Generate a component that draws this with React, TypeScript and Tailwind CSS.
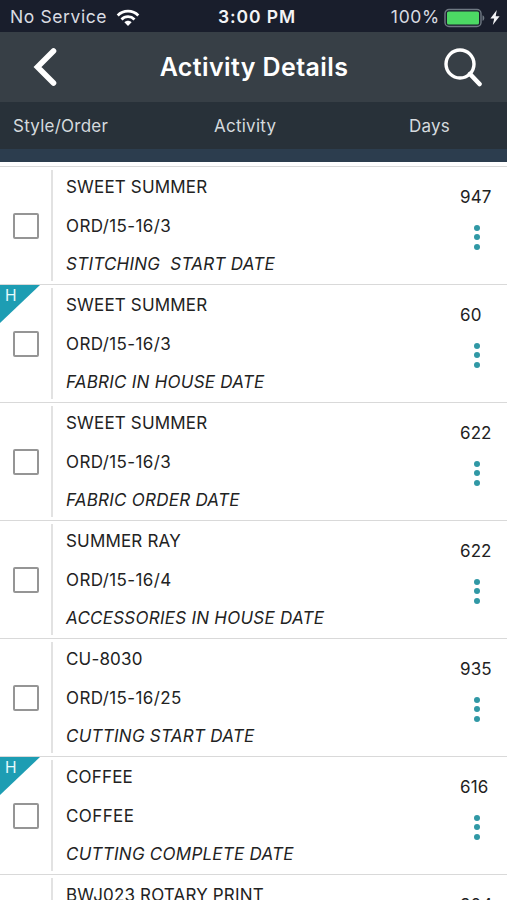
interface Activity {
  style: string;
  order: string;
  activity: string;
  days: string;
  highlighted?: boolean;
}

const activities: Activity[] = [
  { style: "SWEET SUMMER", order: "ORD/15-16/3", activity: "STITCHING  START DATE", days: "947" },
  { style: "SWEET SUMMER", order: "ORD/15-16/3", activity: "FABRIC IN HOUSE DATE", days: "60", highlighted: true },
  { style: "SWEET SUMMER", order: "ORD/15-16/3", activity: "FABRIC ORDER DATE", days: "622" },
  { style: "SUMMER RAY", order: "ORD/15-16/4", activity: "ACCESSORIES IN HOUSE DATE", days: "622" },
  { style: "CU-8030", order: "ORD/15-16/25", activity: "CUTTING START DATE", days: "935" },
  { style: "COFFEE", order: "COFFEE", activity: "CUTTING COMPLETE DATE", days: "616", highlighted: true },
  { style: "BWJ023 ROTARY PRINT", order: "", activity: "", days: "304" },
];

function StatusBar() {
  return (
    <div className="grid h-8 grid-cols-[1fr_auto_1fr] items-center bg-[#191e2c] pt-[3px] pr-[7px] pl-[10px] text-[17.5px] text-[#d9dce2]">
      <div className="flex items-center gap-[9px]">
        <span className="tracking-[0.6px]">No Service</span>
        <svg width="24" height="18" viewBox="0 0 24 18" fill="none" stroke="#fff" strokeWidth="2.8">
          <path d="M1.7 6.4C7.3.8 16.7.8 22.3 6.4" />
          <path d="M5.5 10.4c3.6-3.6 9.4-3.6 13 0" />
          <path d="M8.4 13.2c2-2 5.2-2 7.2 0L12 17z" fill="#fff" stroke="none" />
        </svg>
      </div>
      <span className="pl-[4px] font-semibold tracking-[0.9px] text-[#f3f4f6]">3:00 PM</span>
      <div className="flex items-center justify-end">
        <span className="tracking-[0.7px]">100%</span>
        <svg className="ml-[4px]" width="42" height="20" viewBox="0 0 42 20">
          <rect x="1" y="1.5" width="36" height="17" rx="4" fill="none" stroke="#6f7983" strokeWidth="1.4" />
          <rect x="3" y="3.5" width="32" height="13" rx="1.5" fill="#4cd964" />
          <path d="M38.5 7.2c2.4.8 2.4 4.8 0 5.6z" fill="#6f7983" />
        </svg>
        <svg className="ml-[4px]" width="10" height="15" viewBox="0 0 10 15">
          <path d="M6.8 0 .4 8.4h3.8L2.8 15 9.6 6.2H5.7z" fill="#f3f4f6" />
        </svg>
      </div>
    </div>
  );
}

function Header() {
  return (
    <header className="flex h-[70px] items-center justify-between bg-[#373f46] pr-[24px] pl-[32px] text-white">
      <button aria-label="Back">
        <svg width="26" height="40" viewBox="0 0 26 40" fill="none" stroke="#fff" strokeWidth="5.6" strokeLinecap="round">
          <path d="M21.500 4 5.500 20l16 16" />
        </svg>
      </button>
      <h1 className="pt-[2px] pl-[7px] text-[25px] font-semibold tracking-[0.4px]">Activity Details</h1>
      <button aria-label="Search">
        <svg width="40" height="40" viewBox="0 0 40 40" fill="none" stroke="#fff">
          <circle cx="17" cy="17" r="14" strokeWidth="3.4" />
          <path d="m27 27 9.5 10" strokeWidth="4.6" strokeLinecap="round" />
        </svg>
      </button>
    </header>
  );
}

function ActivityRow({ item }: { item: Activity }) {
  return (
    <li className="relative flex h-[118px] border-b border-[#d9d9d9] bg-white py-[3px]">
      {item.highlighted && (
        <div className="absolute top-0 left-0 h-[38px] w-10 bg-[#1d9db3] [clip-path:polygon(0_0,100%_0,0_100%)]">
          <span className="absolute top-[2px] left-[5px] text-[15.5px] leading-[18px] text-[#e6fafc]">H</span>
        </div>
      )}
      <div className="flex w-[53px] items-center border-r-2 border-[#e2e2e2] pl-[13px]">
        <span className="h-[26px] w-[26px] rounded-[2px] border-2 border-[#959595]" />
      </div>
      <div className="flex-1 pl-[13px] whitespace-pre">
        <p className="h-[39px] leading-[34px] tracking-[0.17px]">{item.style}</p>
        <p className="h-[38px] leading-[34px] tracking-[0.4px]">{item.order}</p>
        <p className="leading-[34px] tracking-[0.25px] italic">{item.activity}</p>
      </div>
      <div className="w-[47px] pt-[17px]">
        <p className="leading-5 tracking-[0.1px]">{item.days}</p>
        <div className="mt-[17.5px] ml-[14px] flex flex-col gap-[3.5px]">
          <span className="h-[6px] w-[6px] rounded-full bg-[#3098a5]" />
          <span className="h-[6px] w-[6px] rounded-full bg-[#3098a5]" />
          <span className="h-[6px] w-[6px] rounded-full bg-[#3098a5]" />
        </div>
      </div>
    </li>
  );
}

export default function App() {
  return (
    <div className="h-[900px] w-[507px] overflow-hidden bg-white font-['Inter',sans-serif]">
      <StatusBar />
      <Header />
      <div className="flex h-[47px] items-center bg-[#283139] pt-[2px] pl-[13px] text-[17px] tracking-[0.25px] text-[#d5dade]">
        <span className="w-[201px]">Style/Order</span>
        <span className="w-[195px]">Activity</span>
        <span>Days</span>
      </div>
      <div className="h-[13px] bg-[#2c3d4e]" />
      <ul className="mt-1 border-t border-[#d9d9d9] text-[17px] text-[#222]">
        {activities.map((item, i) => (
          <ActivityRow key={i} item={item} />
        ))}
      </ul>
    </div>
  );
}
